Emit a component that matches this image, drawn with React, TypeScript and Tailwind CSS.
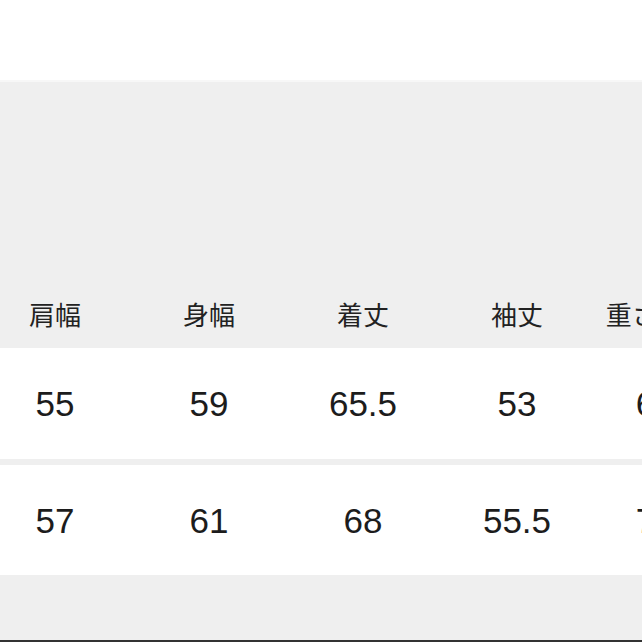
const headers = ['肩幅', '身幅', '着丈', '袖丈', '重さ（g）']

const rows = [
    ['55', '59', '65.5', '53', '640'],
    ['57', '61', '68', '55.5', '720'],
]

const Cell = ({ children, big, last }: { children: string; big?: boolean; last?: boolean }) => {
    return (
        <div
            className={
                (last ? 'w-[142px] ' : 'w-[154px] ') +
                (big
                    ? 'shrink-0 text-center whitespace-nowrap text-[35px] leading-none text-[#1c1c1c] font-["Liberation_Sans","Roboto",sans-serif]'
                    : 'shrink-0 text-center whitespace-nowrap text-[26px] leading-none text-[#222] font-["Noto_Sans_CJK_JP",sans-serif]')
            }
        >
            {children}
        </div>
    )
}

const App = () => {
    return (
        <div className="h-[642px] w-[642px] overflow-hidden flex flex-col bg-[#efefef]">
            <div className="h-[80px] bg-white shrink-0" />
            <div className="h-[2px] bg-[#f7f7f7] shrink-0" />
            <div className="h-[200px] shrink-0" />
            <div className="h-[66px] shrink-0 flex items-center pb-[2px]">
                <div className="flex -ml-[22px]">
                    {headers.map((h, i) => (
                        <Cell key={h} last={i === 4}>
                            {h}
                        </Cell>
                    ))}
                </div>
            </div>
            {rows.map((row, r) => (
                <div
                    key={r}
                    className={
                        'shrink-0 bg-white flex items-center ' +
                        (r === 0 ? 'h-[111px] mb-[6px]' : 'h-[110px]')
                    }
                >
                    <div className="flex -ml-[22px]">
                        {row.map((v, i) => (
                            <Cell key={i} big last={i === 4}>
                                {v}
                            </Cell>
                        ))}
                    </div>
                </div>
            ))}
            <div className="flex-1" />
            <div className="h-[2px] bg-[#333] shrink-0" />
        </div>
    )
}

export default App
